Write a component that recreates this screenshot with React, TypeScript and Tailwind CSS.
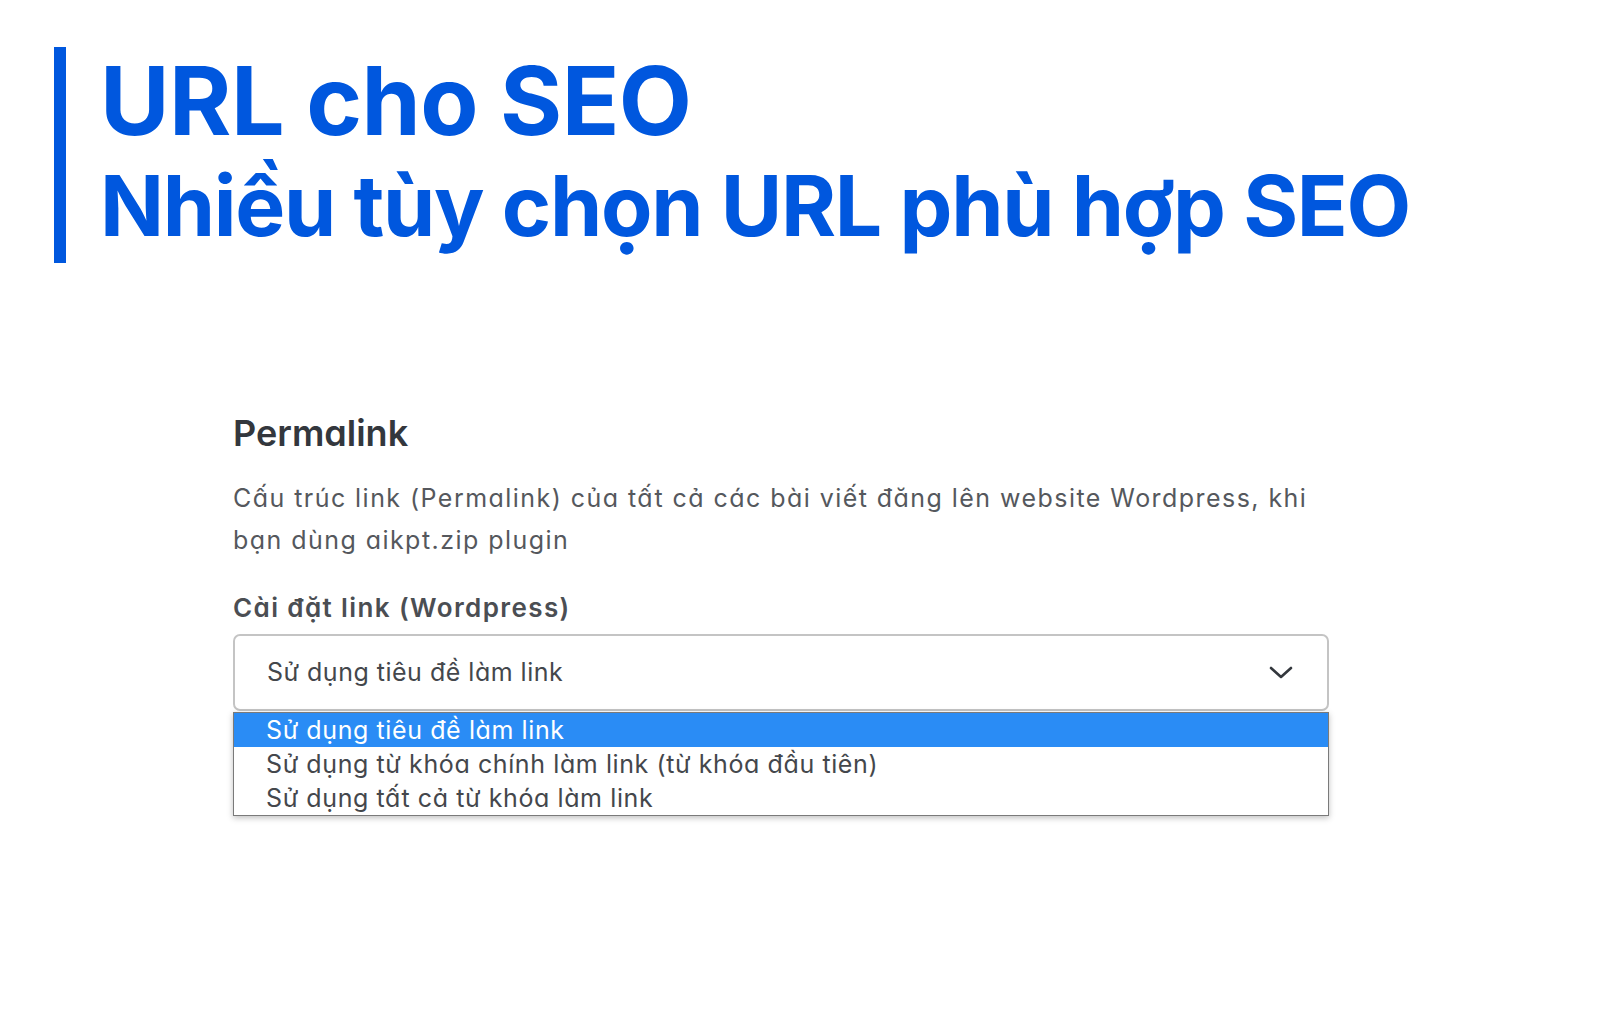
import React from "react";

const options = [
  "Sử dụng tiêu đề làm link",
  "Sử dụng từ khóa chính làm link (từ khóa đầu tiên)",
  "Sử dụng tất cả từ khóa làm link",
];

export default function App() {
  return (
    <div
      className="w-[1600px] h-[1016px] bg-white overflow-hidden"
      style={{ fontFamily: "Inter, 'Noto Sans', sans-serif" }}
    >
      <div className="pt-[47px] pl-[54px] flex">
        <div className="w-[12px] h-[216px] bg-[#0057de] shrink-0" />
        <div className="pl-[34px] text-[#0057de] font-bold">
          <div className="text-[95px] leading-[104px] mt-[2px] tracking-[-0.5px]">URL cho SEO</div>
          <div className="text-[84px] leading-[106px] tracking-[-1.3px] whitespace-nowrap">
            Nhiều tùy chọn URL phù hợp SEO
          </div>
        </div>
      </div>

      <div className="ml-[233px] mt-[148px] w-[1096px] [font-feature-settings:'cv11']">
        <h2 className="text-[36px] leading-[44px] font-semibold text-[#33373d]">Permalink</h2>
        <p className="mt-[22px] text-[25px] leading-[42px] text-[#55585d] tracking-[1.45px] whitespace-nowrap">
          Cấu trúc link (Permalink) của tất cả các bài viết đăng lên website Wordpress, khi
          <br />
          bạn dùng aikpt.zip plugin
        </p>
        <div className="mt-[31px] text-[26px] leading-[32px] font-semibold text-[#4b4e53] tracking-[1.4px]">
          Cài đặt link (Wordpress)
        </div>
        <div className="relative mt-[10px]">
          <div className="h-[77px] border-2 border-[#c4c4c4] rounded-[7px] flex items-center justify-between pl-[32px] pr-[34px]">
            <span className="text-[25px] text-[#44474c] tracking-[0.5px]">Sử dụng tiêu đề làm link</span>
            <svg width="24" height="14" viewBox="0 0 24 14" fill="none">
              <path d="M2 2 L12 11 L22 2" stroke="#33373d" strokeWidth="2.6" strokeLinecap="round" strokeLinejoin="round" />
            </svg>
          </div>
          <div className="absolute left-0 right-0 top-[78px] border border-[#7a7a7a] bg-white shadow-[0_2px_6px_rgba(0,0,0,0.25)]">
            {options.map((o, i) => (
              <div
                key={o}
                className={
                  i === 0
                    ? "h-[34px] leading-[34px] pl-[32px] text-[25px] bg-[#2a8cf5] text-white tracking-[0.6px]"
                    : "h-[34px] leading-[34px] pl-[32px] text-[25px] text-[#44474c] tracking-[0.6px]"
                }
              >
                {o}
              </div>
            ))}
          </div>
        </div>
      </div>
    </div>
  );
}
